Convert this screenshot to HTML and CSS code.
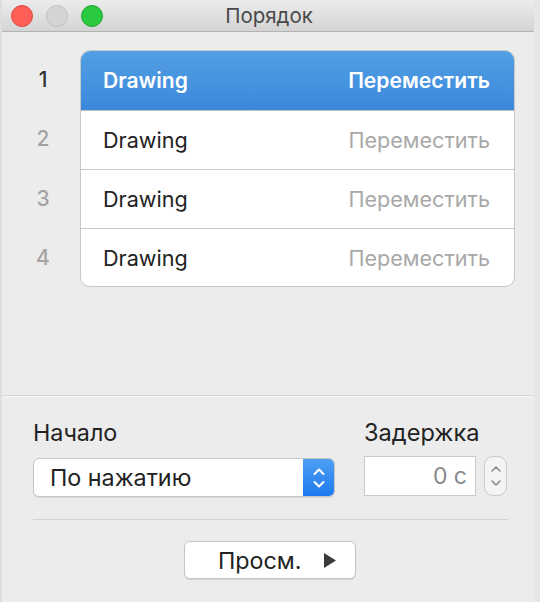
FILE: index.html
```html
<!DOCTYPE html>
<html lang="ru">
<head>
<meta charset="utf-8">
<title>Порядок</title>
<link rel="stylesheet" href="styles.css">
</head>
<body>
<div class="window">
  <header class="titlebar">
    <div class="lights">
      <span class="light red"></span>
      <span class="light gray"></span>
      <span class="light green"></span>
    </div>
    <div class="title">Порядок</div>
  </header>

  <section class="order">
    <div class="numbers">
      <div class="num active">1</div>
      <div class="num">2</div>
      <div class="num">3</div>
      <div class="num">4</div>
    </div>
    <div class="list">
      <div class="row selected"><span class="name">Drawing</span><span class="action">Переместить</span></div>
      <div class="row"><span class="name">Drawing</span><span class="action">Переместить</span></div>
      <div class="row"><span class="name">Drawing</span><span class="action">Переместить</span></div>
      <div class="row"><span class="name">Drawing</span><span class="action">Переместить</span></div>
    </div>
  </section>

  <section class="settings">
    <div class="fields">
      <div class="field start">
        <div class="label">Начало</div>
        <div class="popup">
          <span class="popup-text">По нажатию</span>
          <span class="popup-arrows">
            <svg width="14" height="22" viewBox="0 0 14 22"><path d="M2.5 7 L7 2.5 L11.5 7" fill="none" stroke="#fff" stroke-width="2" stroke-linecap="round" stroke-linejoin="round"/><path d="M2.5 15 L7 19.5 L11.5 15" fill="none" stroke="#fff" stroke-width="2" stroke-linecap="round" stroke-linejoin="round"/></svg>
          </span>
        </div>
      </div>
      <div class="field delay">
        <div class="label">Задержка</div>
        <div class="delay-row">
          <div class="delay-input">0 с</div>
          <div class="stepper">
            <svg width="14" height="26" viewBox="0 0 14 26"><path d="M3 8 L7 4 L11 8" fill="none" stroke="#8c8c8c" stroke-width="1.6" stroke-linecap="round" stroke-linejoin="round"/><path d="M3 18 L7 22 L11 18" fill="none" stroke="#8c8c8c" stroke-width="1.6" stroke-linecap="round" stroke-linejoin="round"/></svg>
          </div>
        </div>
      </div>
    </div>
    <div class="sep"></div>
    <div class="actions">
      <button class="preview"><span>Просм.</span><svg class="play" width="12" height="15" viewBox="0 0 12 15"><path d="M0 0 L12 7.5 L0 15 Z" fill="#3a3a3a"/></svg></button>
    </div>
  </section>
</div>
</body>
</html>
```

FILE: styles.css
```css
* { box-sizing: border-box; }
html, body {
  margin: 0;
  padding: 0;
  width: 540px;
  height: 602px;
  overflow: hidden;
  background: #ececec;
  font-family: Inter, "Noto Sans", "DejaVu Sans", sans-serif;
}
.window {
  width: 540px;
  height: 602px;
  background: #ececec;
  border-left: 2px solid #dedede;
  border-right: 6px solid #e6e6e6;
  display: flex;
  flex-direction: column;
}
.titlebar {
  height: 32px;
  flex: none;
  background: linear-gradient(#ececec, #d4d4d4);
  border-bottom: 1px solid #b3b3b3;
  display: flex;
  align-items: center;
  position: relative;
}
.lights {
  display: flex;
  gap: 13px;
  padding-left: 9px;
  position: relative;
  z-index: 1;
}
.light {
  width: 22px;
  height: 22px;
  border-radius: 50%;
  display: block;
}
.red { background: #fe5f57; border: 1px solid #e0443e; }
.gray { background: #d4d4d4; border: 1px solid #c2c2c2; }
.green { background: #29c940; border: 1px solid #1aab29; }
.title {
  position: absolute;
  left: 0;
  right: 0;
  top: 0;
  bottom: 0;
  display: flex;
  align-items: center;
  justify-content: center;
  font-size: 20.5px;
  color: #4a4a4a;
  padding-left: 2px;
}

.order {
  flex: none;
  height: 364px;
  display: flex;
  padding-top: 18px;
  border-bottom: 1px solid #d4d4d4;
  box-shadow: 0 1px 0 #f6f6f6;
}
.numbers {
  width: 78px;
  display: flex;
  flex-direction: column;
}
.num {
  height: 59.3px;
  display: flex;
  align-items: center;
  justify-content: center;
  font-size: 21px;
  font-weight: 500;
  color: #a3a3a3;
  padding-left: 4px;
}
.num.active { color: #333; }
.list {
  width: 435px;
  height: 237px;
  background: #fff;
  border: 1px solid #c8c8c8;
  border-radius: 10px;
  overflow: hidden;
  display: flex;
  flex-direction: column;
}
.row {
  height: 59px;
  flex: none;
  display: flex;
  align-items: center;
  justify-content: space-between;
  padding: 0 24px 0 22px;
  border-bottom: 1px solid #c8c8c8;
  font-size: 21.6px;
}
.row:last-child { border-bottom: none; flex: 1; }
.name { color: #222; }
.action { color: #a8a8a8; }
.row.selected {
  background: linear-gradient(#529fe3, #3b88dc);
  border-bottom: 1px solid #c0c0c0;
  height: 60px;
}
.row.selected .name,
.row.selected .action {
  color: #fff;
  font-weight: 600;
  font-size: 21.1px;
}

.settings {
  flex: 1;
  display: flex;
  flex-direction: column;
  padding: 23px 27px 0 31px;
}
.fields {
  display: flex;
  justify-content: space-between;
}
.label {
  font-size: 23.3px;
  color: #222;
  line-height: 28px;
  height: 37px;
}
.popup {
  width: 302px;
  height: 39px;
  background: #fff;
  border: 1px solid #c6c6c6;
  border-radius: 6px;
  display: flex;
  align-items: center;
  overflow: hidden;
  margin-top: 2px;
  box-shadow: 0 1px 1px rgba(0,0,0,0.08);
}
.popup-text {
  flex: 1;
  font-size: 23.3px;
  color: #222;
  padding-left: 16px;
}
.popup-arrows {
  width: 32px;
  height: 39px;
  margin: -1px -1px -1px 0;
  background: linear-gradient(#4fa0f3, #1c79ee);
  display: flex;
  align-items: center;
  justify-content: center;
  border-radius: 0 6px 6px 0;
}
.field.delay .label { padding-left: 0; font-size: 23.6px; }
.delay-row {
  display: flex;
  gap: 8px;
  align-items: center;
}
.delay-input {
  width: 112px;
  height: 40px;
  background: #fff;
  border: 1px solid #cbcbcb;
  font-size: 23px;
  color: #8a8a8a;
  display: flex;
  align-items: center;
  justify-content: flex-end;
  padding-right: 8px;
}
.stepper {
  width: 23px;
  height: 40px;
  border: 1px solid #cacaca;
  border-radius: 9px;
  background: #f4f4f4;
  display: flex;
  align-items: center;
  justify-content: center;
}
.sep {
  height: 1px;
  background: #d2d2d2;
  margin-top: 22px;
  margin-right: -1px;
}
.actions {
  display: flex;
  justify-content: center;
  padding-top: 21px;
  padding-right: 0;
}
.preview {
  width: 172px;
  height: 38px;
  background: #fff;
  border: 1px solid #c4c4c4;
  border-radius: 6px;
  box-shadow: 0 1px 1px rgba(0,0,0,0.1);
  font-family: inherit;
  font-size: 23.3px;
  color: #222;
  display: flex;
  align-items: center;
  justify-content: flex-start;
  padding: 0 0 0 33px;
  gap: 0;
}
.preview span { width: 106px; text-align: left; }
.play { display: block; }
```
